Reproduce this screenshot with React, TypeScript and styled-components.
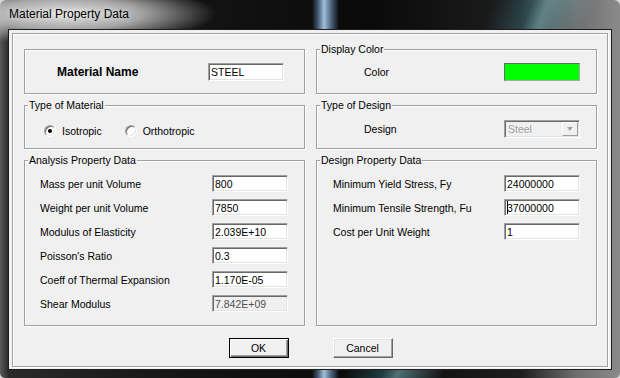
import React from 'react';
import styled, { createGlobalStyle } from 'styled-components';

const GlobalStyle = createGlobalStyle`
  html, body {
    margin: 0;
    padding: 0;
    background: #d8d8d8;
  }
  body {
    font-family: "Liberation Sans", Arial, sans-serif;
    font-size: 10.5px;
    color: #000;
  }
`;

const Window = styled.div`
  width: 620px;
  height: 378px;
  display: flex;
  flex-direction: column;
  border-radius: 6px 6px 5px 5px;
  overflow: hidden;
  background:
    radial-gradient(ellipse 150px 30px at 66px 14px, rgba(232, 232, 232, 0.97) 0%, rgba(200, 200, 200, 0.8) 50%, rgba(120, 120, 120, 0) 100%),
    linear-gradient(90deg, rgba(0, 0, 0, 0) 312px, rgba(110, 150, 190, 0.55) 318px, rgba(170, 200, 228, 0.95) 324px, rgba(120, 160, 200, 0.6) 331px, rgba(0, 0, 0, 0) 339px),
    linear-gradient(112deg, rgba(0, 0, 0, 0) 64%, rgba(60, 120, 130, 0.45) 69%, rgba(120, 175, 180, 0.6) 71%, rgba(0, 0, 0, 0) 77%),
    linear-gradient(90deg, #5a5a5a 0%, #2a2a2a 1.4%, #141414 30%, #0a0a0a 60%, #1e1e1e 84%, #6e6e6e 93%, #8a8a8a 100%);
`;

const TitleBar = styled.div`
  height: 29px;
  flex: none;
  display: flex;
  align-items: center;
  padding: 0 0 1px 9px;
  box-sizing: border-box;
  font-size: 12px;
  color: #000;
  text-shadow: 0 0 6px rgba(255, 255, 255, 0.9);
`;

const Client = styled.div`
  flex: 1;
  display: flex;
  margin: 0 8px 8px 8px;
  padding: 3px 3px 2px 3px;
  border: 1px solid #1c1c1c;
  background: #f0f0f0;
`;

const Etched = styled.div`
  flex: 1;
  display: flex;
  flex-direction: column;
  padding: 15px 10px 8px 11px;
  border: 1px solid #a0a0a0;
  box-shadow: inset 1px 1px 0 #fff, 1px 1px 0 #fff;
`;

const Groups = styled.div`
  display: grid;
  grid-template-columns: 281px 281px;
  grid-template-rows: 45px 44px 166px;
  gap: 11px;
`;

const GroupBox = styled.div`
  display: flex;
  flex-direction: column;
  border: 1px solid #a0a0a0;
  box-shadow: inset 1px 1px 0 #fff, 1px 1px 0 #fff;
`;

const Legend = styled.span`
  display: block;
  width: fit-content;
  margin: -7px 0 -6px 3px;
  padding: 0 1px;
  line-height: 13px;
  background: #f0f0f0;
`;

const InlineBody = styled.div<{ $indent: number; $top?: number }>`
  flex: 1;
  display: flex;
  align-items: center;
  padding: ${p => p.$top ?? 0}px 0 0 ${p => p.$indent}px;
`;

const FieldLabel = styled.span<{ $width: number; $bold?: boolean }>`
  width: ${p => p.$width}px;
  flex: none;
  font-size: ${p => (p.$bold ? '12px' : '10.5px')};
  font-weight: ${p => (p.$bold ? 700 : 400)};
`;

const Sunken = styled.div`
  box-sizing: border-box;
  border: 1px solid;
  border-color: #a0a0a0 #fff #fff #a0a0a0;
  box-shadow: inset 1px 1px 0 #696969, inset -1px -1px 0 #e3e3e3;
`;

const TextBox = styled(Sunken)<{ $disabled?: boolean; $height?: number }>`
  width: 76px;
  height: ${p => p.$height ?? 17}px;
  display: flex;
  align-items: center;
  padding: 0 2px;
  background: ${p => (p.$disabled ? '#f0f0f0' : '#fff')};
  color: ${p => (p.$disabled ? '#505050' : '#000')};
  white-space: nowrap;
`;

const Caret = styled.span`
  width: 1px;
  height: 13px;
  margin-right: -1px;
  background: #000;
`;

const Swatch = styled.div`
  width: 76px;
  height: 18px;
  box-sizing: border-box;
  border: 1px solid;
  border-color: #6a6a6a #a8a8a8 #a8a8a8 #6a6a6a;
  background: #00ff00;
`;

const Combo = styled(Sunken)`
  width: 76px;
  height: 18px;
  display: flex;
  align-items: stretch;
  padding: 1px;
  background: #f0f0f0;
  color: #a0a0a0;
`;

const ComboText = styled.span`
  flex: 1;
  display: flex;
  align-items: center;
  padding-left: 2px;
`;

const ComboArrow = styled.span`
  width: 16px;
  box-sizing: border-box;
  display: flex;
  align-items: center;
  justify-content: center;
  border: 1px solid;
  border-color: #fff #a0a0a0 #a0a0a0 #fff;
  background: #f0f0f0;

  &::after {
    content: '';
    width: 0;
    height: 0;
    border-left: 3.5px solid transparent;
    border-right: 3.5px solid transparent;
    border-top: 4px solid #a0a0a0;
    filter: drop-shadow(1px 1px 0 #fff);
  }
`;

const RadioRow = styled(InlineBody)`
  gap: 23px;
`;

const RadioOption = styled.label`
  display: flex;
  align-items: center;
  gap: 6px;
`;

const RadioCircle = styled.span<{ $checked?: boolean }>`
  width: 12px;
  height: 12px;
  box-sizing: border-box;
  display: flex;
  align-items: center;
  justify-content: center;
  border-radius: 50%;
  border: 1px solid;
  border-color: #a0a0a0 #fff #fff #a0a0a0;
  box-shadow: inset 1px 1px 0 #696969, inset -1px -1px 0 #e3e3e3;
  background: #fff;

  &::after {
    content: '';
    width: 4px;
    height: 4px;
    border-radius: 50%;
    background: ${p => (p.$checked ? '#000' : 'transparent')};
  }
`;

const PropertyGrid = styled.div<{ $indent: number }>`
  display: grid;
  grid-template-columns: 1fr 76px;
  grid-auto-rows: 17px;
  row-gap: 7px;
  align-items: center;
  padding: 14px 16px 0 ${p => p.$indent}px;
`;

const ButtonRow = styled.div`
  display: flex;
  justify-content: center;
  gap: 44px;
  margin-top: 12px;
`;

const DialogButton = styled.button<{ $default?: boolean }>`
  width: 60px;
  height: 20px;
  padding: 0;
  font-family: "Liberation Sans", Arial, sans-serif;
  font-size: 10.5px;
  color: #000;
  background: #f0f0f0;
  border: 1px solid;
  border-color: ${p => (p.$default ? '#000' : '#fff #696969 #696969 #fff')};
  box-shadow: ${p =>
    p.$default
      ? 'inset 1px 1px 0 #fff, inset -1px -1px 0 #696969, inset -2px -2px 0 #a0a0a0'
      : 'inset -1px -1px 0 #a0a0a0, inset 1px 1px 0 #e3e3e3'};
`;

const analysis = [
  { label: 'Mass per unit Volume', value: '800' },
  { label: 'Weight per unit Volume', value: '7850' },
  { label: 'Modulus of Elasticity', value: '2.039E+10' },
  { label: "Poisson's Ratio", value: '0.3' },
  { label: 'Coeff of Thermal Expansion', value: '1.170E-05' },
  { label: 'Shear Modulus', value: '7.842E+09', disabled: true },
];

const design = [
  { label: 'Minimum Yield Stress, Fy', value: '24000000' },
  { label: 'Minimum Tensile Strength, Fu', value: '37000000', caret: true },
  { label: 'Cost per Unit Weight', value: '1' },
];

const App = () => (
  <>
    <GlobalStyle />
    <Window>
      <TitleBar>Material Property Data</TitleBar>
      <Client>
        <Etched>
          <Groups>
            <GroupBox>
              <InlineBody $indent={32}>
                <FieldLabel $width={151} $bold>Material Name</FieldLabel>
                <TextBox $height={18}>STEEL</TextBox>
              </InlineBody>
            </GroupBox>

            <GroupBox>
              <Legend>Display Color</Legend>
              <InlineBody $indent={47}>
                <FieldLabel $width={140}>Color</FieldLabel>
                <Swatch />
              </InlineBody>
            </GroupBox>

            <GroupBox>
              <Legend>Type of Material</Legend>
              <RadioRow $indent={19} $top={7}>
                <RadioOption>
                  <RadioCircle $checked />
                  Isotropic
                </RadioOption>
                <RadioOption>
                  <RadioCircle />
                  Orthotropic
                </RadioOption>
              </RadioRow>
            </GroupBox>

            <GroupBox>
              <Legend>Type of Design</Legend>
              <InlineBody $indent={47} $top={3}>
                <FieldLabel $width={140}>Design</FieldLabel>
                <Combo>
                  <ComboText>Steel</ComboText>
                  <ComboArrow />
                </Combo>
              </InlineBody>
            </GroupBox>

            <GroupBox>
              <Legend>Analysis Property Data</Legend>
              <PropertyGrid $indent={15}>
                {analysis.map(row => (
                  <React.Fragment key={row.label}>
                    <span>{row.label}</span>
                    <TextBox $disabled={row.disabled}>{row.value}</TextBox>
                  </React.Fragment>
                ))}
              </PropertyGrid>
            </GroupBox>

            <GroupBox>
              <Legend>Design Property Data</Legend>
              <PropertyGrid $indent={16}>
                {design.map(row => (
                  <React.Fragment key={row.label}>
                    <span>{row.label}</span>
                    <TextBox>
                      {row.caret && <Caret />}
                      {row.value}
                    </TextBox>
                  </React.Fragment>
                ))}
              </PropertyGrid>
            </GroupBox>
          </Groups>

          <ButtonRow>
            <DialogButton $default>OK</DialogButton>
            <DialogButton>Cancel</DialogButton>
          </ButtonRow>
        </Etched>
      </Client>
    </Window>
  </>
);

export default App;
